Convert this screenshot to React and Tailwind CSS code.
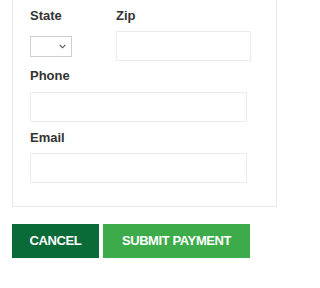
import React from "react";

export default function App() {
  const font = { fontFamily: '"Liberation Sans", Arial, sans-serif' };
  return (
    <div className="w-[288px] h-[288px] bg-white overflow-hidden" style={font}>
      <div className="ml-[12px] w-[265px] border-x border-b border-[#e8e8e8] pl-[17px] pt-[8px] pb-[23px]">
        <div className="flex">
          <div className="w-[86px] flex flex-col">
            <label className="text-[13px] leading-[16px] font-bold text-[#333] mb-[7px]">State</label>
            <div className="h-[30px] flex items-center">
              <div className="w-[42px] h-[21px] border border-[#cfcfcf] bg-white flex items-center justify-end pr-[5px]">
                <svg width="7" height="5" viewBox="0 0 7 5" fill="none">
                  <path d="M0.8 1 L3.5 3.8 L6.2 1" stroke="#555" strokeWidth="1.1" />
                </svg>
              </div>
            </div>
          </div>
          <div className="flex flex-col">
            <label className="text-[13px] leading-[16px] font-bold text-[#333] mb-[7px]">Zip</label>
            <div className="w-[135px] h-[30px] border border-[#ececec] bg-white" />
          </div>
        </div>
        <div className="flex flex-col mt-[7px]">
          <label className="text-[13px] leading-[16px] font-bold text-[#333] mb-[8px]">Phone</label>
          <div className="w-[217px] h-[30px] border border-[#ececec] bg-white" />
        </div>
        <div className="flex flex-col mt-[8px]">
          <label className="text-[13px] leading-[16px] font-bold text-[#333] mb-[7px]">Email</label>
          <div className="w-[217px] h-[30px] border border-[#ececec] bg-white" />
        </div>
      </div>
      <div className="flex gap-[4px] ml-[12px] mt-[17px]">
        <button className="w-[87px] h-[34px] bg-[#0b6b38] text-white text-[13px] font-bold tracking-[-0.4px] flex items-center justify-center">
          CANCEL
        </button>
        <button className="w-[147px] h-[34px] bg-[#3dab4a] text-white text-[13px] font-bold tracking-[-0.4px] flex items-center justify-center">
          SUBMIT PAYMENT
        </button>
      </div>
    </div>
  );
}
